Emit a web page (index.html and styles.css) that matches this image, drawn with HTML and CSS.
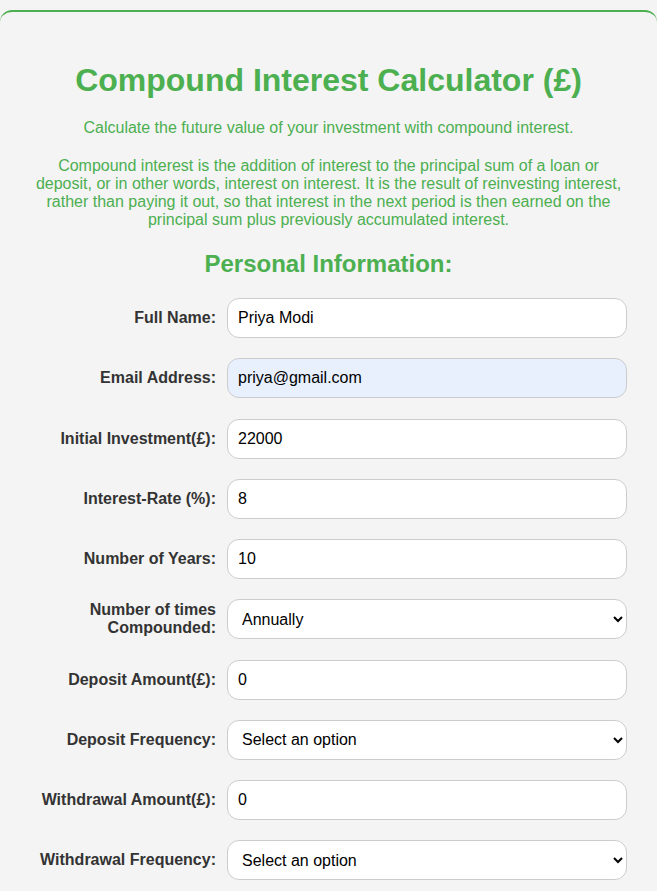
FILE: index.html
```html
<!DOCTYPE html>
<html lang="en">
<head>
<meta charset="utf-8">
<title>Compound Interest Calculator (£)</title>
<link rel="stylesheet" href="styles.css">
</head>
<body>
<div class="container">
  <h1 class="title">Compound Interest Calculator (£)</h1>
  <p class="lead">Calculate the future value of your investment with compound interest.</p>
  <p class="intro">Compound interest is the addition of interest to the principal sum of a loan or deposit, or in other words, interest on interest. It is the result of reinvesting interest, rather than paying it out, so that interest in the next period is then earned on the principal sum plus previously accumulated interest.</p>
  <h2 class="section-title">Personal Information:</h2>
  <form class="form">
    <div class="row">
      <label class="label" for="name">Full Name:</label>
      <input class="field" id="name" type="text" value="Priya Modi">
    </div>
    <div class="row">
      <label class="label" for="email">Email Address:</label>
      <input class="field field-autofill" id="email" type="email" value="priya@gmail.com">
    </div>
    <div class="row">
      <label class="label" for="principal">Initial Investment(£):</label>
      <input class="field" id="principal" type="text" value="22000">
    </div>
    <div class="row">
      <label class="label" for="rate">Interest-Rate (%):</label>
      <input class="field" id="rate" type="text" value="8">
    </div>
    <div class="row">
      <label class="label" for="years">Number of Years:</label>
      <input class="field" id="years" type="text" value="10">
    </div>
    <div class="row">
      <label class="label" for="times">Number of times Compounded:</label>
      <select class="field select" id="times">
        <option>Annually</option>
        <option>Semi-Annually</option>
        <option>Quarterly</option>
        <option>Monthly</option>
      </select>
    </div>
    <div class="row">
      <label class="label" for="deposit">Deposit Amount(£):</label>
      <input class="field" id="deposit" type="text" value="0">
    </div>
    <div class="row">
      <label class="label" for="depfreq">Deposit Frequency:</label>
      <select class="field select" id="depfreq">
        <option>Select an option</option>
        <option>Monthly</option>
        <option>Annually</option>
      </select>
    </div>
    <div class="row">
      <label class="label" for="withdraw">Withdrawal Amount(£):</label>
      <input class="field" id="withdraw" type="text" value="0">
    </div>
    <div class="row">
      <label class="label" for="wfreq">Withdrawal Frequency:</label>
      <select class="field select" id="wfreq">
        <option>Select an option</option>
        <option>Monthly</option>
        <option>Annually</option>
      </select>
    </div>
  </form>
</div>
</body>
</html>
```

FILE: styles.css
```css
html, body {
  margin: 0;
  padding: 0;
  background: #f4f4f4;
  font-family: "Liberation Sans", Arial, sans-serif;
}

.container {
  margin-top: 10px;
  padding: 30px 30px 40px;
  background: #f4f4f4;
  border-top: 2px solid #4caf50;
  border-radius: 12px;
  box-sizing: border-box;
  width: 100%;
}

.title {
  margin: 20px 0 20px;
  font-size: 32px;
  line-height: 37px;
  font-weight: bold;
  color: #4caf50;
  text-align: center;
}

.lead,
.intro {
  margin: 0 0 20px;
  font-size: 16px;
  line-height: 18px;
  color: #4caf50;
  text-align: center;
}

.intro {
  margin-bottom: 21px;
}

.section-title {
  margin: 0 0 20px;
  font-size: 24px;
  line-height: 28px;
  font-weight: bold;
  color: #4caf50;
  text-align: center;
}

.form {
  display: flex;
  flex-direction: column;
  gap: 20.25px;
}

.row {
  display: grid;
  grid-template-columns: 186px 1fr;
  column-gap: 11px;
  align-items: center;
}

.label {
  font-size: 16px;
  line-height: 18px;
  font-weight: bold;
  color: #333;
  text-align: right;
}

.field {
  box-sizing: border-box;
  width: 100%;
  height: 40px;
  padding: 10px;
  font-family: "Liberation Sans", Arial, sans-serif;
  font-size: 16px;
  color: #000;
  background: #fff;
  border: 1px solid #ccc;
  border-radius: 12px;
  outline: none;
}

.field-autofill {
  background: #e8f0fe;
}

.select {
  padding: 0 6px 0 10px;
}
```
